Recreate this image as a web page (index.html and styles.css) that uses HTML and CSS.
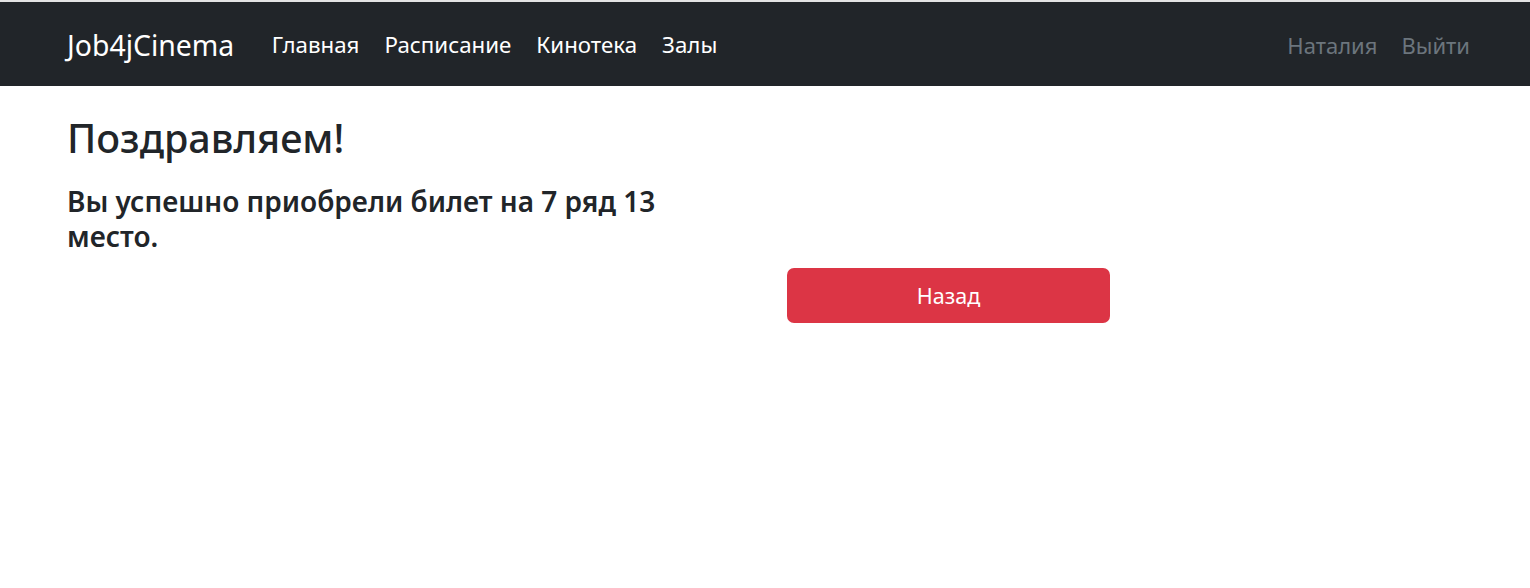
FILE: index.html
```html
<!DOCTYPE html>
<html lang="ru">
<head>
<meta charset="utf-8">
<title>Job4jCinema</title>
<link rel="stylesheet" href="styles.css">
</head>
<body>
<nav class="navbar">
  <a class="brand" href="#">Job4jCinema</a>
  <ul class="nav">
    <li><a class="nav-link" href="#">Главная</a></li>
    <li><a class="nav-link" href="#">Расписание</a></li>
    <li><a class="nav-link" href="#">Кинотека</a></li>
    <li><a class="nav-link" href="#">Залы</a></li>
  </ul>
  <ul class="nav nav-right">
    <li><a class="nav-link muted" href="#">Наталия</a></li>
    <li><a class="nav-link muted" href="#">Выйти</a></li>
  </ul>
</nav>
<main class="content">
  <h1 class="title">Поздравляем!</h1>
  <h3 class="message">Вы успешно приобрели билет на 7 ряд 13 место.</h3>
  <div class="actions">
    <a class="btn-back" href="#">Назад</a>
  </div>
</main>
</body>
</html>
```
FILE: styles.css
```css
* { box-sizing: border-box; }
html, body {
  margin: 0;
  padding: 0;
  background: #fff;
  font-family: "Noto Sans", "Open Sans", sans-serif;
  color: #212529;
}
a { text-decoration: none; }
.navbar {
  display: flex;
  align-items: center;
  height: 86px;
  border-top: 2px solid #e3e3e3;
  background: #212529;
  padding: 2px 48px 0 67px;
}
.brand {
  color: #fff;
  font-size: 28.4px;
  margin-right: 25px;
  line-height: 1;
}
.nav {
  display: flex;
  list-style: none;
  margin: 0;
  padding: 0;
}
.nav-right { margin-left: auto; }
.nav-link {
  display: block;
  color: #fff;
  font-size: 22.3px;
  padding: 0 12.5px;
  line-height: 1;
}
.nav-link.muted {
  color: #6c757d;
  font-size: 22px;
  padding: 0 12px;
}
.content {
  padding: 0 67px;
}
.title {
  margin: 0;
  padding-top: 29px;
  font-size: 39.5px;
  font-weight: 500;
  line-height: 1.2;
}
.message {
  margin: 22px 0 0;
  width: 670px;
  font-size: 28px;
  font-weight: 600;
  line-height: 35px;
}
.actions {
  display: flex;
  padding-left: 720px;
  margin-top: 14px;
}
.btn-back {
  display: flex;
  align-items: center;
  justify-content: center;
  width: 323px;
  height: 55px;
  background: #dc3545;
  color: #fff;
  font-size: 21.5px;
  border-radius: 7px;
}
```
